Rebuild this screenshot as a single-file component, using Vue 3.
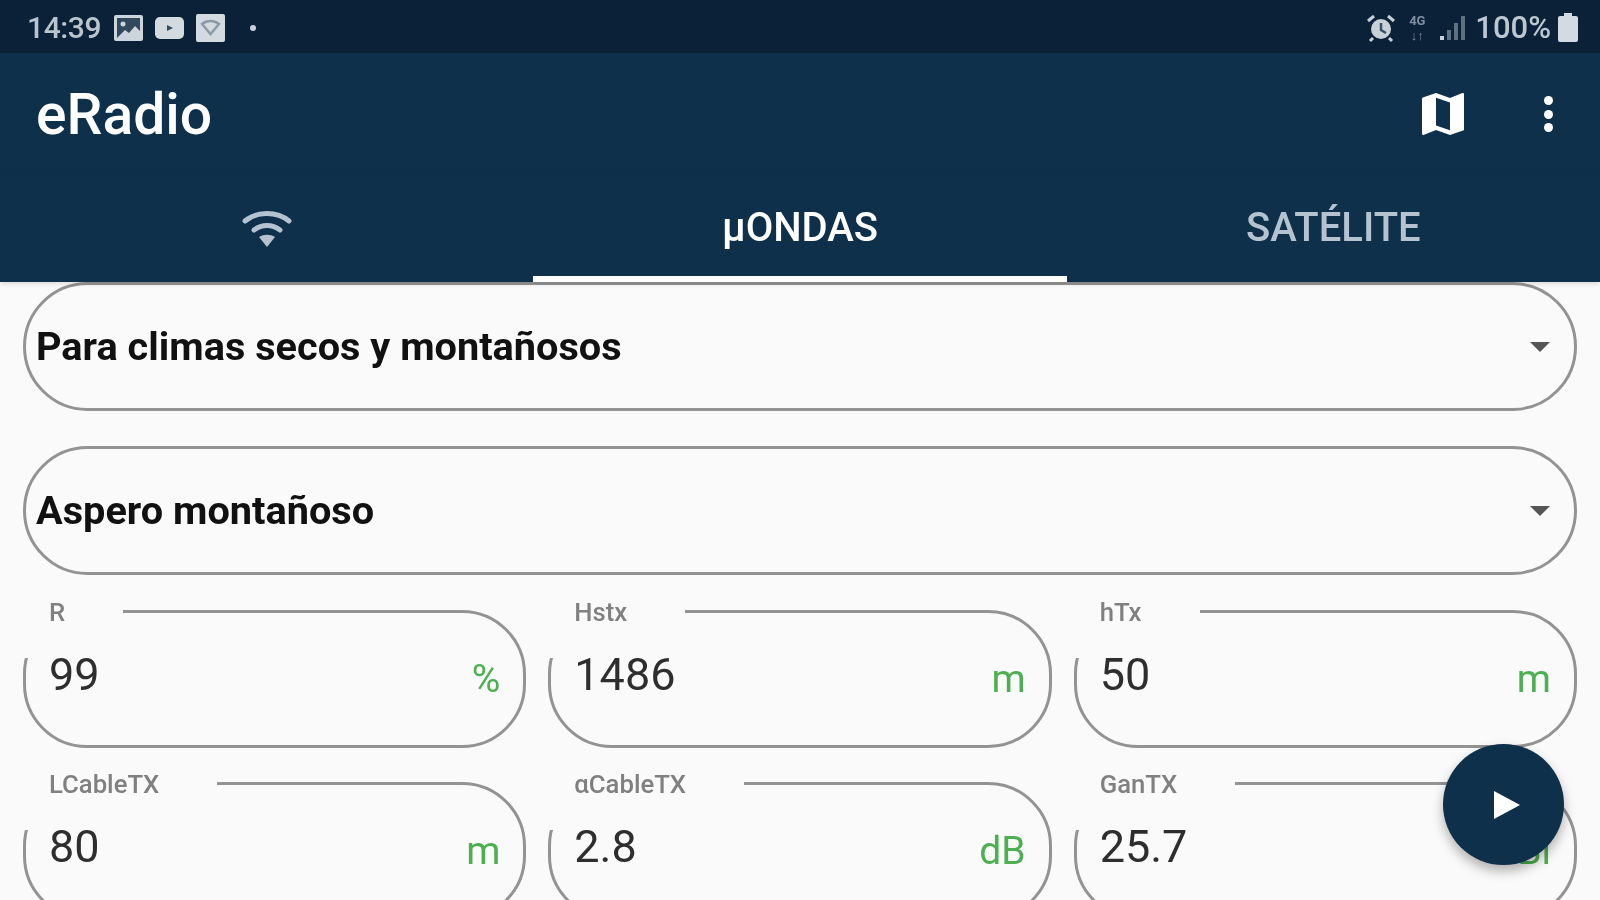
<script setup>
const selects = ['Para climas secos y montañosos', 'Aspero montañoso']
const fields = [
  { label: 'R', value: '99', unit: '%' },
  { label: 'Hstx', value: '1486', unit: 'm' },
  { label: 'hTx', value: '50', unit: 'm' },
  { label: 'LCableTX', value: '80', unit: 'm' },
  { label: 'αCableTX', value: '2.8', unit: 'dB' },
  { label: 'GanTX', value: '25.7', unit: 'dBi' }
]
</script>

<template>
  <div class="screen">
    <header class="status">
      <div class="status-group">
        <span class="time">14:39</span>
        <svg class="note" width="29" height="26" viewBox="0 0 29 26"><rect width="29" height="26" rx="2" fill="#ccd5dc"/><rect x="3" y="3" width="23" height="20" fill="#31485e"/><circle cx="9" cy="9" r="2.5" fill="#ccd5dc"/><path d="M3 23l8-8 4 3 6-7 5 5v7z" fill="#ccd5dc"/></svg>
        <svg class="note" width="29" height="22" viewBox="0 0 29 22"><rect width="29" height="22" rx="5" fill="#d3dbe1"/><path d="M12 8l6 3-6 3z" fill="#344a5e"/></svg>
        <svg class="note" width="29" height="28" viewBox="0 0 29 28"><rect width="29" height="28" rx="2" fill="#d3dbe1"/><path d="M6 10c5-4 12-4 17 0l-8.500 10z" fill="none" stroke="#8b9aa6" stroke-width="2.500"/></svg>
        <span class="dot"></span>
      </div>
      <div class="status-group right">
        <svg width="30" height="30" viewBox="0 0 30 30"><circle cx="15" cy="16" r="10" fill="#c8d1d8"/><path d="M15 10v7l5 3" fill="none" stroke="#3a5064" stroke-width="2.500"/><path d="M2 8l6-5M28 8l-6-5M7 25l-3 3M23 25l3 3" stroke="#c8d1d8" stroke-width="3"/></svg>
        <span class="net"><span>4G</span><span>↓↑</span></span>
        <svg width="26" height="26" viewBox="0 0 26 26"><rect x="1" y="21" width="4" height="4" fill="#c8d1d8"/><rect x="8" y="15" width="4" height="10" fill="#5e7282"/><rect x="15" y="8" width="4" height="17" fill="#5e7282"/><rect x="22" y="1" width="4" height="24" fill="#5e7282"/></svg>
        <span class="pct">100%</span>
        <svg width="20" height="29" viewBox="0 0 20 29"><path d="M6 0h8v3h4a2 2 0 0 1 2 2v22a2 2 0 0 1-2 2H2a2 2 0 0 1-2-2V5a2 2 0 0 1 2-2h4z" fill="#d3dbe1"/></svg>
      </div>
    </header>

    <div class="appbar">
      <h1 class="title">eRadio</h1>
      <div class="actions">
        <svg width="56" height="56" viewBox="0 0 24 24"><path fill="#fff" d="M20.500 3l-.16.03L15 5.100 9 3 3.360 4.900c-.21.07-.36.25-.36.48V20.500c0 .28.22.5.5.5l.16-.03L9 18.900l6 2.100 5.640-1.900c.21-.07.36-.25.36-.48V3.500c0-.28-.22-.5-.5-.5zM15 19l-6-2.110V5l6 2.110V19z"/></svg>
        <span class="kebab"><i></i><i></i><i></i></span>
      </div>
    </div>

    <nav class="tabs">
      <div class="tab">
        <svg width="50" height="40" viewBox="0 0 50 40" fill="none" stroke="#b4c3cf" stroke-width="5" stroke-linecap="round"><path d="M3 13c12-10 32-10 44 0"/><path d="M12 22c8-6 18-6 26 0"/><path fill="#b4c3cf" stroke="none" d="M17 29c5-3 11-3 16 0l-8 10z"/></svg>
      </div>
      <div class="tab active">µONDAS</div>
      <div class="tab">SATÉLITE</div>
    </nav>

    <main class="content">
      <div v-for="s in selects" :key="s" class="select">
        <span>{{ s }}</span>
        <i class="arrow"></i>
      </div>
      <div class="grid">
        <div v-for="f in fields" :key="f.label" class="field">
          <span class="label">{{ f.label }}</span>
          <span class="value">{{ f.value }}</span>
          <span class="unit">{{ f.unit }}</span>
        </div>
      </div>
    </main>

    <button class="fab" aria-label="Calcular">
      <svg width="26" height="28" viewBox="0 0 26 28"><path d="M0 0l26 14L0 28z" fill="#fff"/></svg>
    </button>
  </div>
</template>

<style>
html, body { margin: 0; overflow: hidden; }
html {
  background: linear-gradient(#0b2138 0 53px, #0e304a 53px 282px, #fafafa 282px) no-repeat;
  background-color: #fafafa;
}
body { background: transparent; }
</style>

<style scoped>
.screen {
  position: relative;
  width: 1600px;
  height: 900px;
  overflow: hidden;
  display: flex;
  flex-direction: column;
  background: #fafafa;
  font-family: Roboto, "Liberation Sans", sans-serif;
  filter: blur(0.6px);
}
.status {
  height: 53px;
  flex: none;
  display: flex;
  justify-content: space-between;
  align-items: center;
  padding: 2px 22px 0 27px;
  box-sizing: border-box;
  background: #0b2138;
  color: #c8d1d8;
}
.status-group { display: flex; align-items: center; }
.time { font-size: 30px; font-weight: 500; width: 87px; letter-spacing: -0.4px; color: #b9c4cd; }
.note { margin-right: 12px; }
.dot { width: 6px; height: 6px; border-radius: 50%; background: #c8d1d8; margin-left: 13px; }
.right { gap: 8px; }
.net { display: flex; flex-direction: column; font-size: 13px; line-height: 15px; font-weight: 700; color: #7e909e; width: 24px; align-items: center; margin: 0 2px 0 1px; }
.pct { font-size: 31px; font-weight: 500; margin-left: 2px; margin-right: -1px; color: #bcc7d0; }
.appbar {
  flex: none;
  height: 122px;
  padding: 0 47px 0 36px;
  display: flex;
  align-items: center;
  justify-content: space-between;
  background: #0e304a;
  box-sizing: border-box;
}
.title { margin: 0; font-size: 57px; font-weight: 500; color: #fff; }
.actions { display: flex; align-items: center; gap: 73px; }
.kebab { display: flex; flex-direction: column; gap: 4.5px; }
.kebab i { width: 9px; height: 9px; border-radius: 50%; background: #fff; }
.tabs {
  flex: none;
  height: 107px;
  display: grid;
  grid-template-columns: repeat(3, 1fr);
  background: #0e304a;
  position: relative;
  z-index: 1;
  box-shadow: 0 2px 5px rgba(0, 0, 0, 0.12);
}
.tab {
  position: relative;
  display: flex;
  align-items: center;
  justify-content: center;
  padding-bottom: 2px;
  box-sizing: border-box;
  font-size: 40px;
  font-weight: 500;
  color: #b4c3cf;
}
.tab.active { color: #fff; }
.tab.active::after {
  content: "";
  position: absolute;
  left: 0;
  right: 0;
  bottom: 0;
  height: 6px;
  background: #fff;
}
.content { padding: 0 23px; display: flex; flex-direction: column; gap: 35px; }
.select {
  height: 129px;
  box-sizing: border-box;
  border: 3px solid #939393;
  border-radius: 65px;
  display: flex;
  align-items: center;
  justify-content: space-between;
  padding: 0 24px 0 10px;
  font-size: 39.7px;
  font-weight: 700;
  color: #111;
}
.arrow { width: 0; height: 0; border-left: 10px solid transparent; border-right: 10px solid transparent; border-top: 10px solid #555; }
.grid { display: grid; grid-template-columns: repeat(3, 1fr); gap: 34px 22px; }
.field {
  position: relative;
  height: 138px;
  box-sizing: border-box;
  border: 3px solid #939393;
  border-radius: 64px;
  display: flex;
  justify-content: space-between;
  padding: 36px 23px 0 23px;
}
.label {
  position: absolute;
  left: -3px;
  top: -15px;
  height: 60px;
  padding: 0 58px 0 26px;
  box-sizing: border-box;
  background: #fafafa;
  font-size: 25.7px;
  line-height: 28px;
  font-weight: 500;
  color: #808080;
}
.value { position: relative; font-size: 45px; line-height: 52px; color: #2e2e2e; }
.unit { font-size: 39px; line-height: 44px; margin-top: 8px; color: #4caf50; }
.fab {
  position: absolute;
  left: 1443px;
  top: 744px;
  width: 121px;
  height: 121px;
  padding: 0 0 0 6px;
  border: 0;
  border-radius: 50%;
  background: #0e304a;
  display: flex;
  align-items: center;
  justify-content: center;
  box-shadow: 0 6px 12px rgba(0, 0, 0, 0.3);
  z-index: 3;
}
</style>
